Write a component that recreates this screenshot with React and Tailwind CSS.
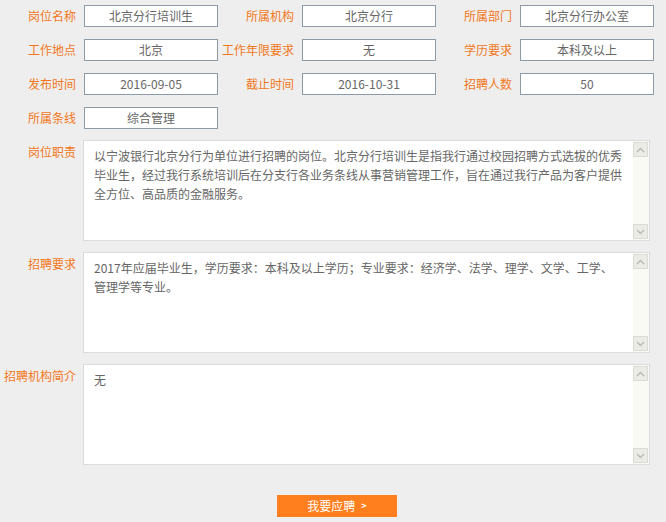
import React from "react";

const font = { fontFamily: '"Noto Sans CJK SC", "Microsoft YaHei", sans-serif' };

const rows = [
  [["岗位名称", "北京分行培训生"], ["所属机构", "北京分行"], ["所属部门", "北京分行办公室"]],
  [["工作地点", "北京"], ["工作年限要求", "无"], ["学历要求", "本科及以上"]],
  [["发布时间", "2016-09-05"], ["截止时间", "2016-10-31"], ["招聘人数", "50"]],
  [["所属条线", "综合管理"]],
];

const areas = [
  ["岗位职责", [
    "以宁波银行北京分行为单位进行招聘的岗位。北京分行培训生是指我行通过校园招聘方式选拔的优秀",
    "毕业生，经过我行系统培训后在分支行各业务条线从事营销管理工作，旨在通过我行产品为客户提供",
    "全方位、高品质的金融服务。",
  ]],
  ["招聘要求", [
    "2017年应届毕业生，学历要求：本科及以上学历；专业要求：经济学、法学、理学、文学、工学、",
    "管理学等专业。",
  ]],
  ["招聘机构简介", ["无"]],
];

function Field({ label, value }) {
  return (
    <div className="flex items-center w-[218px]">
      <div className="w-[76px] text-right text-[12px] leading-[16px] text-[#f2781b] whitespace-nowrap">{label}</div>
      <div className="ml-[8px] w-[134px] h-[22px] border border-[#8d9aa8] bg-white flex items-center justify-center text-[12px] text-[#666]">
        {value}
      </div>
    </div>
  );
}

function Chevron({ up }) {
  return (
    <svg width="9" height="6" viewBox="0 0 9 6">
      <path d={up ? "M1 5 L4.5 1.5 L8 5" : "M1 1 L4.5 4.5 L8 1"} fill="none" stroke="#b9b9b2" strokeWidth="1.3" />
    </svg>
  );
}

function Area({ label, lines }) {
  return (
    <div className="flex items-start">
      <div className="w-[76px] pt-[4px] text-right text-[12px] leading-[16px] text-[#f2781b] whitespace-nowrap">{label}</div>
      <div className="ml-[7px] w-[567px] h-[101px] border border-[#dcdcdc] bg-white flex">
        <div className="flex-1 pl-[10px] pt-[5px] text-[12px] leading-[19px] text-[#666]">
          {lines.map((l, i) => (
            <div key={i} className="whitespace-nowrap">{l}</div>
          ))}
        </div>
        <div className="w-[16px] bg-[#fafaf4] flex flex-col justify-between py-[1px] pr-[1px]">
          <div className="h-[15px] bg-[#ecece6] border border-[#dcdcd4] flex items-center justify-center">
            <Chevron up />
          </div>
          <div className="h-[15px] bg-[#ecece6] border border-[#dcdcd4] flex items-center justify-center">
            <Chevron />
          </div>
        </div>
      </div>
    </div>
  );
}

export default function App() {
  return (
    <div className="w-[666px] h-[522px] bg-[#eeeeee] overflow-hidden" style={font}>
      <div className="pt-[5px] flex flex-col gap-[12px]">
        {rows.map((r, i) => (
          <div key={i} className="flex">
            {r.map(([l, v]) => (
              <Field key={l} label={l} value={v} />
            ))}
          </div>
        ))}
      </div>
      <div className="mt-[11px] flex flex-col gap-[11px]">
        {areas.map(([l, lines]) => (
          <Area key={l} label={l} lines={lines} />
        ))}
      </div>
      <div className="mt-[30px] pl-[277px]">
        <button className="w-[120px] h-[22px] bg-[#ff7f1f] text-white text-[12px] flex items-center justify-center gap-[6px]">
          <span>我要应聘</span>
          <span className="text-[9px] font-bold">&gt;</span>
        </button>
      </div>
    </div>
  );
}
